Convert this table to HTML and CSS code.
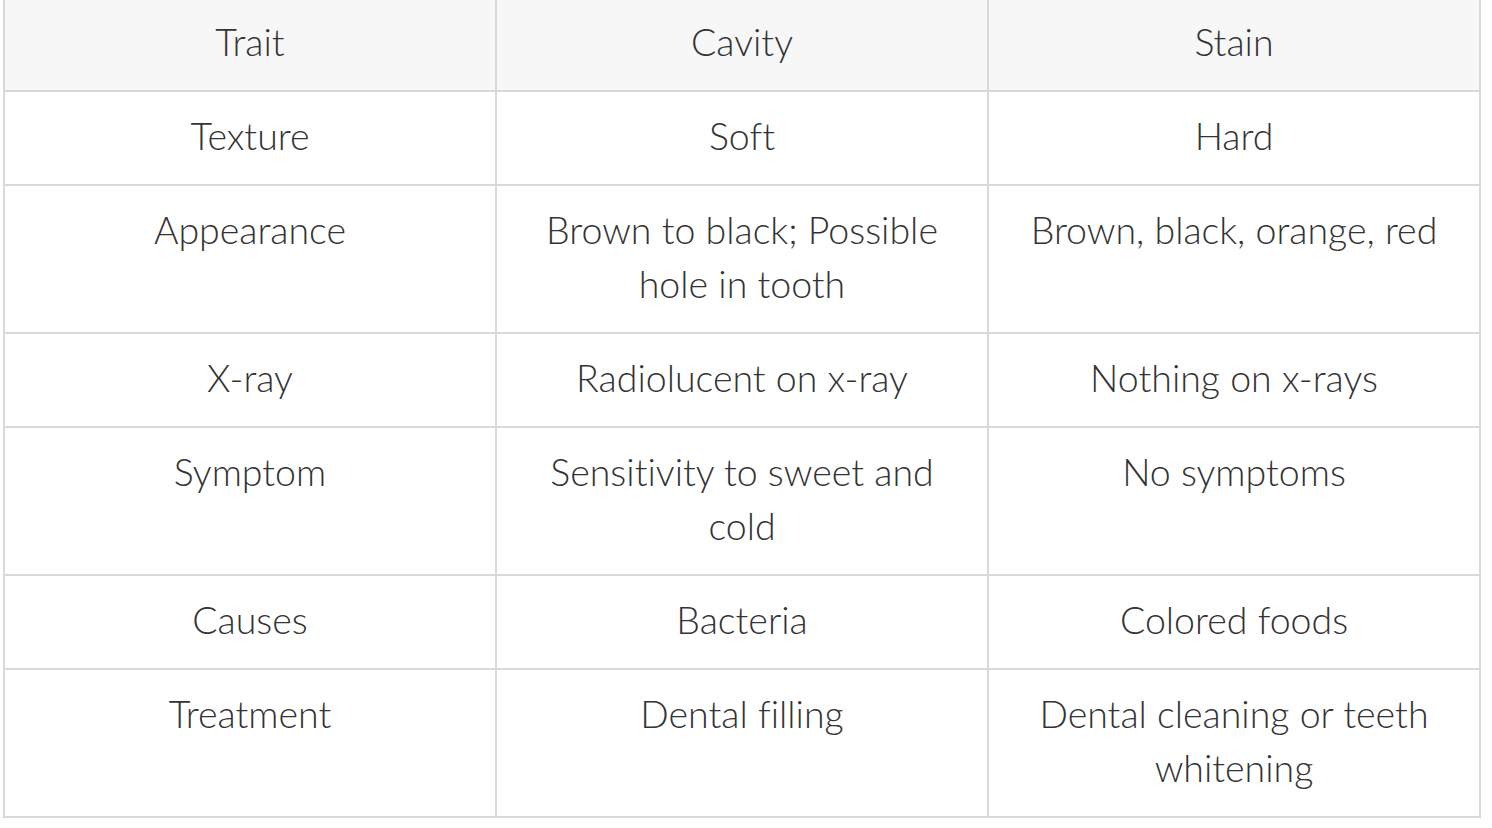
FILE: index.html
```html
<!DOCTYPE html>
<html lang="en">
<head>
<meta charset="utf-8">
<title>Cavity vs Stain</title>
<link rel="stylesheet" href="styles.css">
</head>
<body>
<table class="compare">
  <thead>
    <tr><th>Trait</th><th>Cavity</th><th>Stain</th></tr>
  </thead>
  <tbody>
    <tr><td>Texture</td><td>Soft</td><td>Hard</td></tr>
    <tr><td>Appearance</td><td>Brown to black; Possible hole in tooth</td><td>Brown, black, orange, red</td></tr>
    <tr><td>X-ray</td><td>Radiolucent on x-ray</td><td>Nothing on x-rays</td></tr>
    <tr><td>Symptom</td><td>Sensitivity to sweet and cold</td><td>No symptoms</td></tr>
    <tr><td>Causes</td><td>Bacteria</td><td>Colored foods</td></tr>
    <tr><td>Treatment</td><td>Dental filling</td><td>Dental cleaning or teeth whitening</td></tr>
  </tbody>
</table>
</body>
</html>
```
FILE: styles.css
```css
html, body {
  margin: 0;
  padding: 0;
  background: #ffffff;
}
body {
  padding-left: 3px;
}
.compare {
  margin-top: -4px;
  width: 1478px;
  table-layout: fixed;
  border-collapse: collapse;
  font-family: "Lato", "Liberation Sans", sans-serif;
  font-weight: 300;
  font-size: 37.5px;
  line-height: 54px;
  color: #333333;
  font-variant-ligatures: none;
}
.compare th,
.compare td {
  border: 2px solid #d9d9d9;
  padding: 17px 30px 21px;
  text-align: center;
  vertical-align: top;
  font-weight: 300;
}
.compare th {
  background: #f7f7f7;
}
```
